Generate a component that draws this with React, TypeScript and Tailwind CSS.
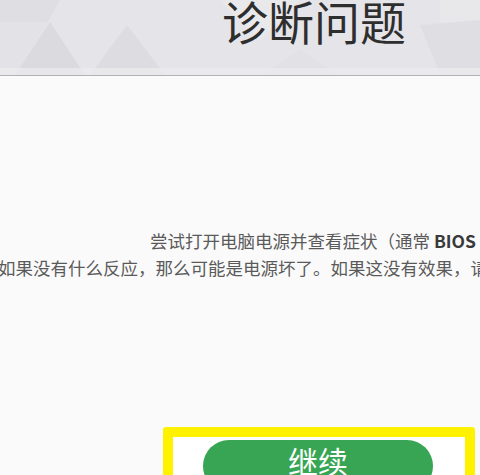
import React from "react";

/* ── Header pattern ───────────────────────────────────────────────── */
function HeaderPattern() {
  return (
    <svg className="absolute inset-0" width="480" height="75" viewBox="0 0 480 75" preserveAspectRatio="none">
      <polygon points="0,0 60,0 48,22 0,22" fill="#dedee3" />
      <polygon points="50,22 15,75 85,75" fill="#dadadf" />
      <polygon points="127,25 90,75 165,75" fill="#dcdce1" />
      <polygon points="0,22 48,22 15,75 0,75" fill="#e3e3e7" />
      <polygon points="220,0 300,0 260,40" fill="#e9e9ec" />
      <polygon points="300,50 260,75 340,75" fill="#e2e2e6" />
      <polygon points="440,0 480,0 480,30 440,22" fill="#e8e8eb" />
      <polygon points="420,25 480,20 480,75 440,75" fill="#dfdfe3" />
      <rect x="0" y="68" width="480" height="7" fill="#ececef" opacity="0.7" />
    </svg>
  );
}

export default function App() {
  return (
    <div
      className="w-[480px] h-[475px] overflow-hidden bg-[#fafafa] flex flex-col"
      style={{ fontFamily: '"Noto Sans CJK SC", "Noto Sans", sans-serif' }}
    >
      {/* Header */}
      <div className="relative h-[76px] flex-shrink-0 bg-[#e5e5e9] border-b border-[#b3b3b7] overflow-hidden">
        <HeaderPattern />
        <div className="relative flex justify-end pr-[74px]">
          <h1 className="text-[46px] leading-none font-normal text-[#2e2e2e] -mt-[3px] whitespace-nowrap">诊断问题</h1>
        </div>
      </div>

      {/* Body text */}
      <div className="mt-[151px] text-[17.5px] leading-[27px] text-[#5a5a5a] whitespace-nowrap">
        <p className="pl-[150px]">
          尝试打开电脑电源并查看症状（通常 <span className="font-bold text-[#3a3a3a]">BIOS</span> 屏幕会出现）。
        </p>
        <p className="-ml-[2px]">如果没有什么反应，那么可能是电源坏了。如果这没有效果，请检查主板。</p>
      </div>

      {/* Continue */}
      <div className="mt-[146px] ml-[163px] w-[312px] border-[10px] border-[#fff200] rounded-[3px] bg-white pt-[3px] pl-[30px]">
        <button className="w-[230px] h-[52px] rounded-full bg-[#37a553] text-white text-[30px] leading-none flex justify-center pt-[5px]">
          继续
        </button>
      </div>
    </div>
  );
}
